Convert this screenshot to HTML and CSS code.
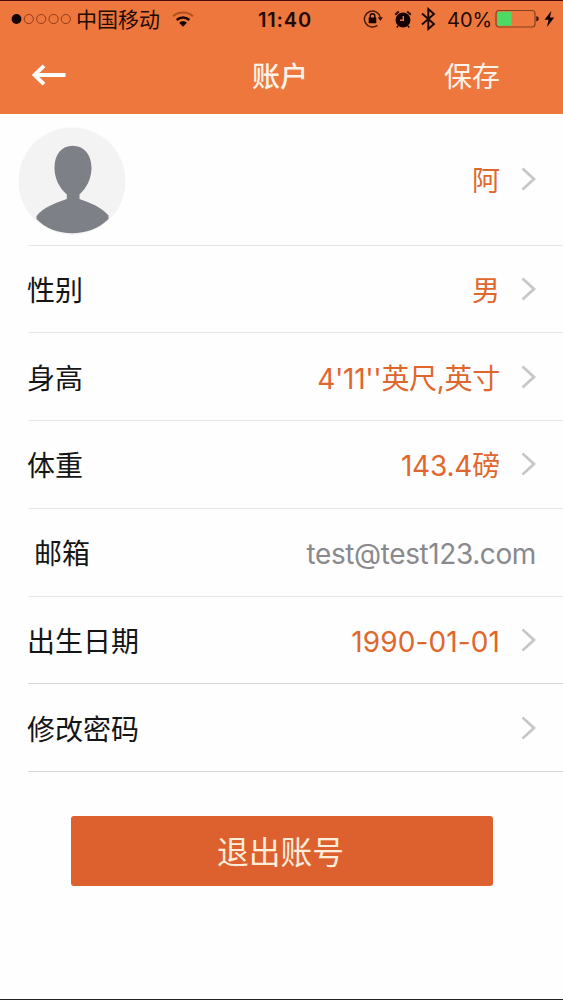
FILE: index.html
```html
<!DOCTYPE html>
<html lang="zh-CN">
<head>
<meta charset="utf-8">
<title>账户</title>
<link rel="stylesheet" href="styles.css">
</head>
<body>
<div class="screen">
  <header class="top">
    <div class="status">
      <div class="status-left">
        <svg class="dots" width="60" height="12" viewBox="0 0 60 12"><circle cx="5.5" cy="6" r="4.9" fill="#120302"/><g fill="none" stroke="#963d18" stroke-width="1"><circle cx="17.8" cy="6" r="4.6"/><circle cx="30.2" cy="6" r="4.6"/><circle cx="42.6" cy="6" r="4.6"/><circle cx="54.8" cy="6" r="4.6"/></g></svg>
        <span class="carrier">中国移动</span>
        <svg class="wifi" width="22" height="17" viewBox="0 0 22 17"><g fill="none"><path d="M1 5.2C6.500.3 15.500.3 21 5.200" stroke="#b0501f" stroke-width="2"/><path d="M4.700 9C8.400 5.700 13.600 5.700 17.300 9" stroke="#1b0803" stroke-width="2.600"/></g><path d="M7.200 11.700C9.400 9.900 12.600 9.900 14.800 11.700L11 15.700Z" fill="#120302"/></svg>
      </div>
      <span class="time">11:40</span>
      <div class="status-right">
        <svg width="21" height="20" viewBox="0 0 21 20"><path d="M14.300 16.400A8 8 0 1 1 17.300 8.500" fill="none" stroke="#4a190a" stroke-width="1.500"/><path d="M14.700 8.200h5.200l-2.500 3.700z" fill="#35100a"/><rect x="5.700" y="8.600" width="7.600" height="5.600" rx=".6" fill="#120302"/><path d="M7.200 9V7a2.300 2.300 0 0 1 4.600 0v2" fill="none" stroke="#120302" stroke-width="1.400"/></svg>
        <svg class="alarm" width="18" height="19" viewBox="0 0 18 19"><circle cx="9" cy="10" r="7.500" fill="#120302"/><path d="M1.200 4.800L4.800 1.600M16.800 4.800L13.200 1.600" stroke="#2a0d07" stroke-width="2"/><path d="M4 16l-1.200 1.400M14 16l1.200 1.400" stroke="#120302" stroke-width="1.600"/><path d="M9.300 6v4.200H6" fill="none" stroke="#ee773e" stroke-width="1.400"/></svg>
        <svg class="bluetooth" width="15" height="24" viewBox="0 0 15 24"><path d="M1 6.500L13 17L7.300 22V2L13 7L1 17.500" fill="none" stroke="#1b0803" stroke-width="1.900"/></svg>
        <span class="percent">40%</span>
        <svg class="battery" width="45" height="20" viewBox="0 0 45 20"><rect x="1" y="1.500" width="39" height="16.500" rx="3" fill="none" stroke="#86401f" stroke-width="1.200"/><path d="M4 2.700h12.500v14.100H4a1.800 1.800 0 0 1-1.800-1.800V4.500A1.800 1.800 0 0 1 4 2.700z" fill="#4cd964"/><path d="M41.300 7q2.500.5 2.500 2.800t-2.500 2.800z" fill="#35100a"/></svg>
        <svg class="bolt" width="11" height="18" viewBox="0 0 11 18"><path d="M7.300 1L.5 9.800h4L3 17l7.200-9.500H6z" fill="#120302"/></svg>
      </div>
    </div>
    <nav class="nav">
      <svg class="back" width="35" height="22" viewBox="0 0 35 22"><path d="M12 1.800L2.500 11L12 20.200M3 11H33.500" fill="none" stroke="#fff" stroke-width="3.800"/></svg>
      <h1 class="title">账户</h1>
      <span class="save">保存</span>
    </nav>
  </header>
  <main class="list">
    <div class="row profile">
      <svg class="avatar" width="108" height="108" viewBox="0 0 108 108"><circle cx="54" cy="54" r="53.500" fill="#f3f3f4"/><path d="M54.700 18.700C66 18.700 73.700 27.500 73.500 41.500C73.300 52.500 68 61.500 61.500 67.500V72C72 75.500 84 80.500 90.500 88.500V92C72 111 36 111 18.500 92V89C25 80.500 38 75.500 48.800 72V67.500C41 60.500 36.700 51.500 36.500 41.500C36.300 27.500 43.500 18.700 54.700 18.700Z" fill="#7d8087"/></svg>
      <span class="value">阿</span>
      <svg class="chevron" width="15" height="24" viewBox="0 0 15 24"><path d="M1.500 1.500L13 12L1.500 22.500"/></svg>
    </div>
    <div class="row">
      <span class="label">性别</span><span class="value">男</span>
      <svg class="chevron" width="15" height="24" viewBox="0 0 15 24"><path d="M1.500 1.500L13 12L1.500 22.500"/></svg>
    </div>
    <div class="row">
      <span class="label">身高</span><span class="value height">4'11''英尺,英寸</span>
      <svg class="chevron" width="15" height="24" viewBox="0 0 15 24"><path d="M1.500 1.500L13 12L1.500 22.500"/></svg>
    </div>
    <div class="row">
      <span class="label">体重</span><span class="value weight">143.4磅</span>
      <svg class="chevron" width="15" height="24" viewBox="0 0 15 24"><path d="M1.500 1.500L13 12L1.500 22.500"/></svg>
    </div>
    <div class="row email-row">
      <span class="label">邮箱</span><span class="value email">test@test123.com</span>
    </div>
    <div class="row strong">
      <span class="label">出生日期</span><span class="value date">1990-01-01</span>
      <svg class="chevron" width="15" height="24" viewBox="0 0 15 24"><path d="M1.500 1.500L13 12L1.500 22.500"/></svg>
    </div>
    <div class="row strong">
      <span class="label">修改密码</span><span class="value"></span>
      <svg class="chevron" width="15" height="24" viewBox="0 0 15 24"><path d="M1.500 1.500L13 12L1.500 22.500"/></svg>
    </div>
  </main>
  <button class="logout">退出账号</button>
</div>
</body>
</html>
```
FILE: styles.css
```css
* { box-sizing: border-box; }
body {
  margin: 0;
  background: #fefefe;
  font-family: Inter, "Noto Sans CJK SC", sans-serif;
}
svg { display: block; flex: none; }
.screen {
  display: flex;
  flex-direction: column;
  height: 1000px;
  border-bottom: 1.5px solid #242024;
  overflow: hidden;
}
.top {
  height: 113.500px;
  flex: none;
  background: #ee773e;
  border-top: 1.500px solid #4d0a08;
}
.status {
  display: grid;
  grid-template-columns: 240px 90px 1fr;
  height: 36px;
  align-items: center;
  color: #220a05;
}
.status-left, .status-right { display: flex; align-items: center; }
.status-left { padding-left: 11px; }
.carrier { margin-left: 5px; padding-top: 2px; font-size: 21px; line-height: 32px; }
.wifi { margin-left: 12px; }
.time {
  padding-top: 2px;
  text-align: center;
  font-size: 20px;
  font-weight: 600;
  letter-spacing: .8px;
}
.status-right { padding-left: 33px; }
.alarm { margin-left: 10px; }
.bluetooth { margin-left: 9px; }
.percent { width: 44px; margin-left: 11px; padding-top: 2px; font-size: 20px; }
.battery { margin-left: 4px; }
.bolt { margin-left: 4px; }
.nav {
  display: grid;
  grid-template-columns: 190px 180px 1fr;
  height: 76px;
  align-items: center;
  color: #fff3e9;
}
.back { margin-left: 32px; }
.title, .save { margin: 0; padding-top: 3px; font-size: 28px; line-height: 40px; }
.title { font-weight: 500; text-align: center; }
.save { padding-left: 74px; }
.list { flex: none; }
.row {
  display: flex;
  align-items: center;
  height: 87.750px;
  margin-left: 28px;
  padding-right: 27px;
  border-bottom: 1px solid #e6e6e8;
  font-size: 28px;
  line-height: 40px;
}
.profile { height: 132px; }
.strong { border-bottom-color: #d6d6d8; }
.avatar { margin: 3px 0 0 -10px; }
.label { margin-left: -1px; padding-top: 4px; color: #151515; }
.value { margin-left: auto; padding-top: 4px; color: #df672d; white-space: nowrap; }
.chevron { margin-left: 21px; }
.chevron path { fill: none; stroke: #c7c7cb; stroke-width: 2.800; }
.height { letter-spacing: -.3px; }
.weight { letter-spacing: -.2px; }
.email-row .label { padding-left: 7px; }
.email { color: #8a898d; letter-spacing: -.4px; }
.date { letter-spacing: .1px; }
.logout {
  flex: none;
  width: 422px;
  height: 70px;
  margin: 44px 0 0 70.500px;
  padding: 0 2px 2px 0;
  border: 0;
  border-radius: 3px;
  background: #dd612e;
  color: #ffeddb;
  font: 31.800px/68px "Noto Sans CJK SC", sans-serif;
}
```
